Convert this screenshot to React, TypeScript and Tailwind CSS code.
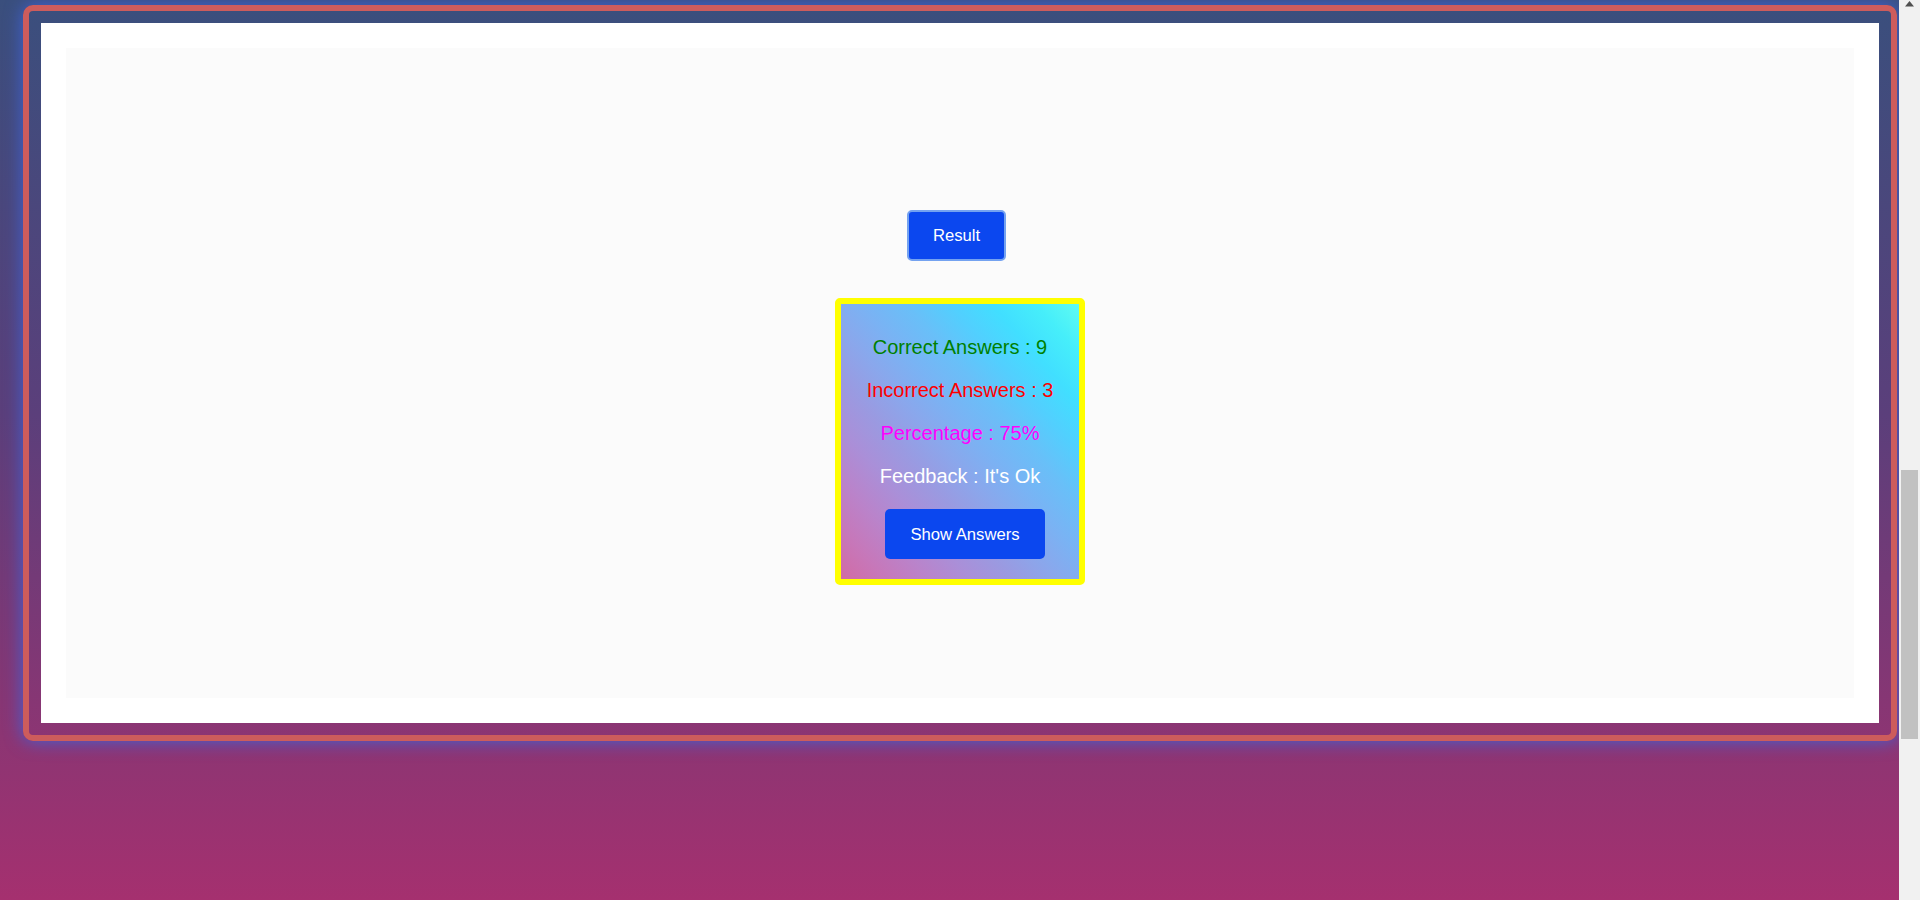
import { useState } from "react";

const lines = [
  { label: "Correct Answers : 9", color: "text-[#008000]" },
  { label: "Incorrect Answers : 3", color: "text-[#ff0000]" },
  { label: "Percentage : 75%", color: "text-[#ff00ff]" },
  { label: "Feedback : It's Ok", color: "text-white" },
];

function ResultCard() {
  return (
    <div className="mt-[37px] flex w-[250px] flex-col items-center rounded-[5px] border-[6px] border-[#ffff00] bg-[linear-gradient(to_right_top,#d16ba5,#c777b9,#ba83ca,#aa8fd8,#9a9ae1,#8aa7ec,#79b3f4,#69bff8,#52cffe,#41dfff,#46eefa,#5ffbf1)] pt-[32px] pb-[20px]">
      <div className="flex flex-col items-center gap-[20px]">
        {lines.map((item) => (
          <p key={item.label} className={`text-[20px] leading-[23px] whitespace-nowrap ${item.color}`}>
            {item.label}
          </p>
        ))}
      </div>
      <button className="mt-[21px] ml-[10px] h-[50px] w-[160px] rounded-[5px] bg-[#0b47ef] text-[16.67px] text-white">
        Show Answers
      </button>
    </div>
  );
}

function App() {
  const [showResult] = useState<boolean>(true);

  return (
    <div className="flex h-[900px] w-full overflow-hidden font-['Liberation_Sans',Arial,sans-serif]">
      <div className="flex-1 bg-[linear-gradient(to_bottom,#3a4f7d_0%,#5b3f7b_46%,#a5306f_100%)] pt-[5px] pl-[23px]">
        <div className="w-[1874px] rounded-[10px] border-[6px] border-[#cd5c5c] p-[12px] shadow-[0_0_18px_#3f63d8]">
          <div className="bg-white p-[25px]">
            <div className="flex h-[650px] flex-col items-center bg-[#fbfbfb] pt-[162px]">
              <button className="mr-[7px] h-[51px] w-[99px] rounded-[5px] border-2 border-[#74a2f0] bg-[#0b47ef] text-[16.67px] text-white">
                Result
              </button>
              {showResult && <ResultCard />}
            </div>
          </div>
        </div>
      </div>

      <div className="flex w-[21px] flex-col items-center bg-[#f1f1f1]">
        <svg width="9" height="6" viewBox="0 0 9 6" className="mt-[1px] block">
          <path d="M4.5 0 L9 5.5 L0 5.5 Z" fill="#505050" />
        </svg>
        <div className="mt-[463px] h-[269px] w-[17px] bg-[#c1c1c1]" />
      </div>
    </div>
  );
}

export default App;
